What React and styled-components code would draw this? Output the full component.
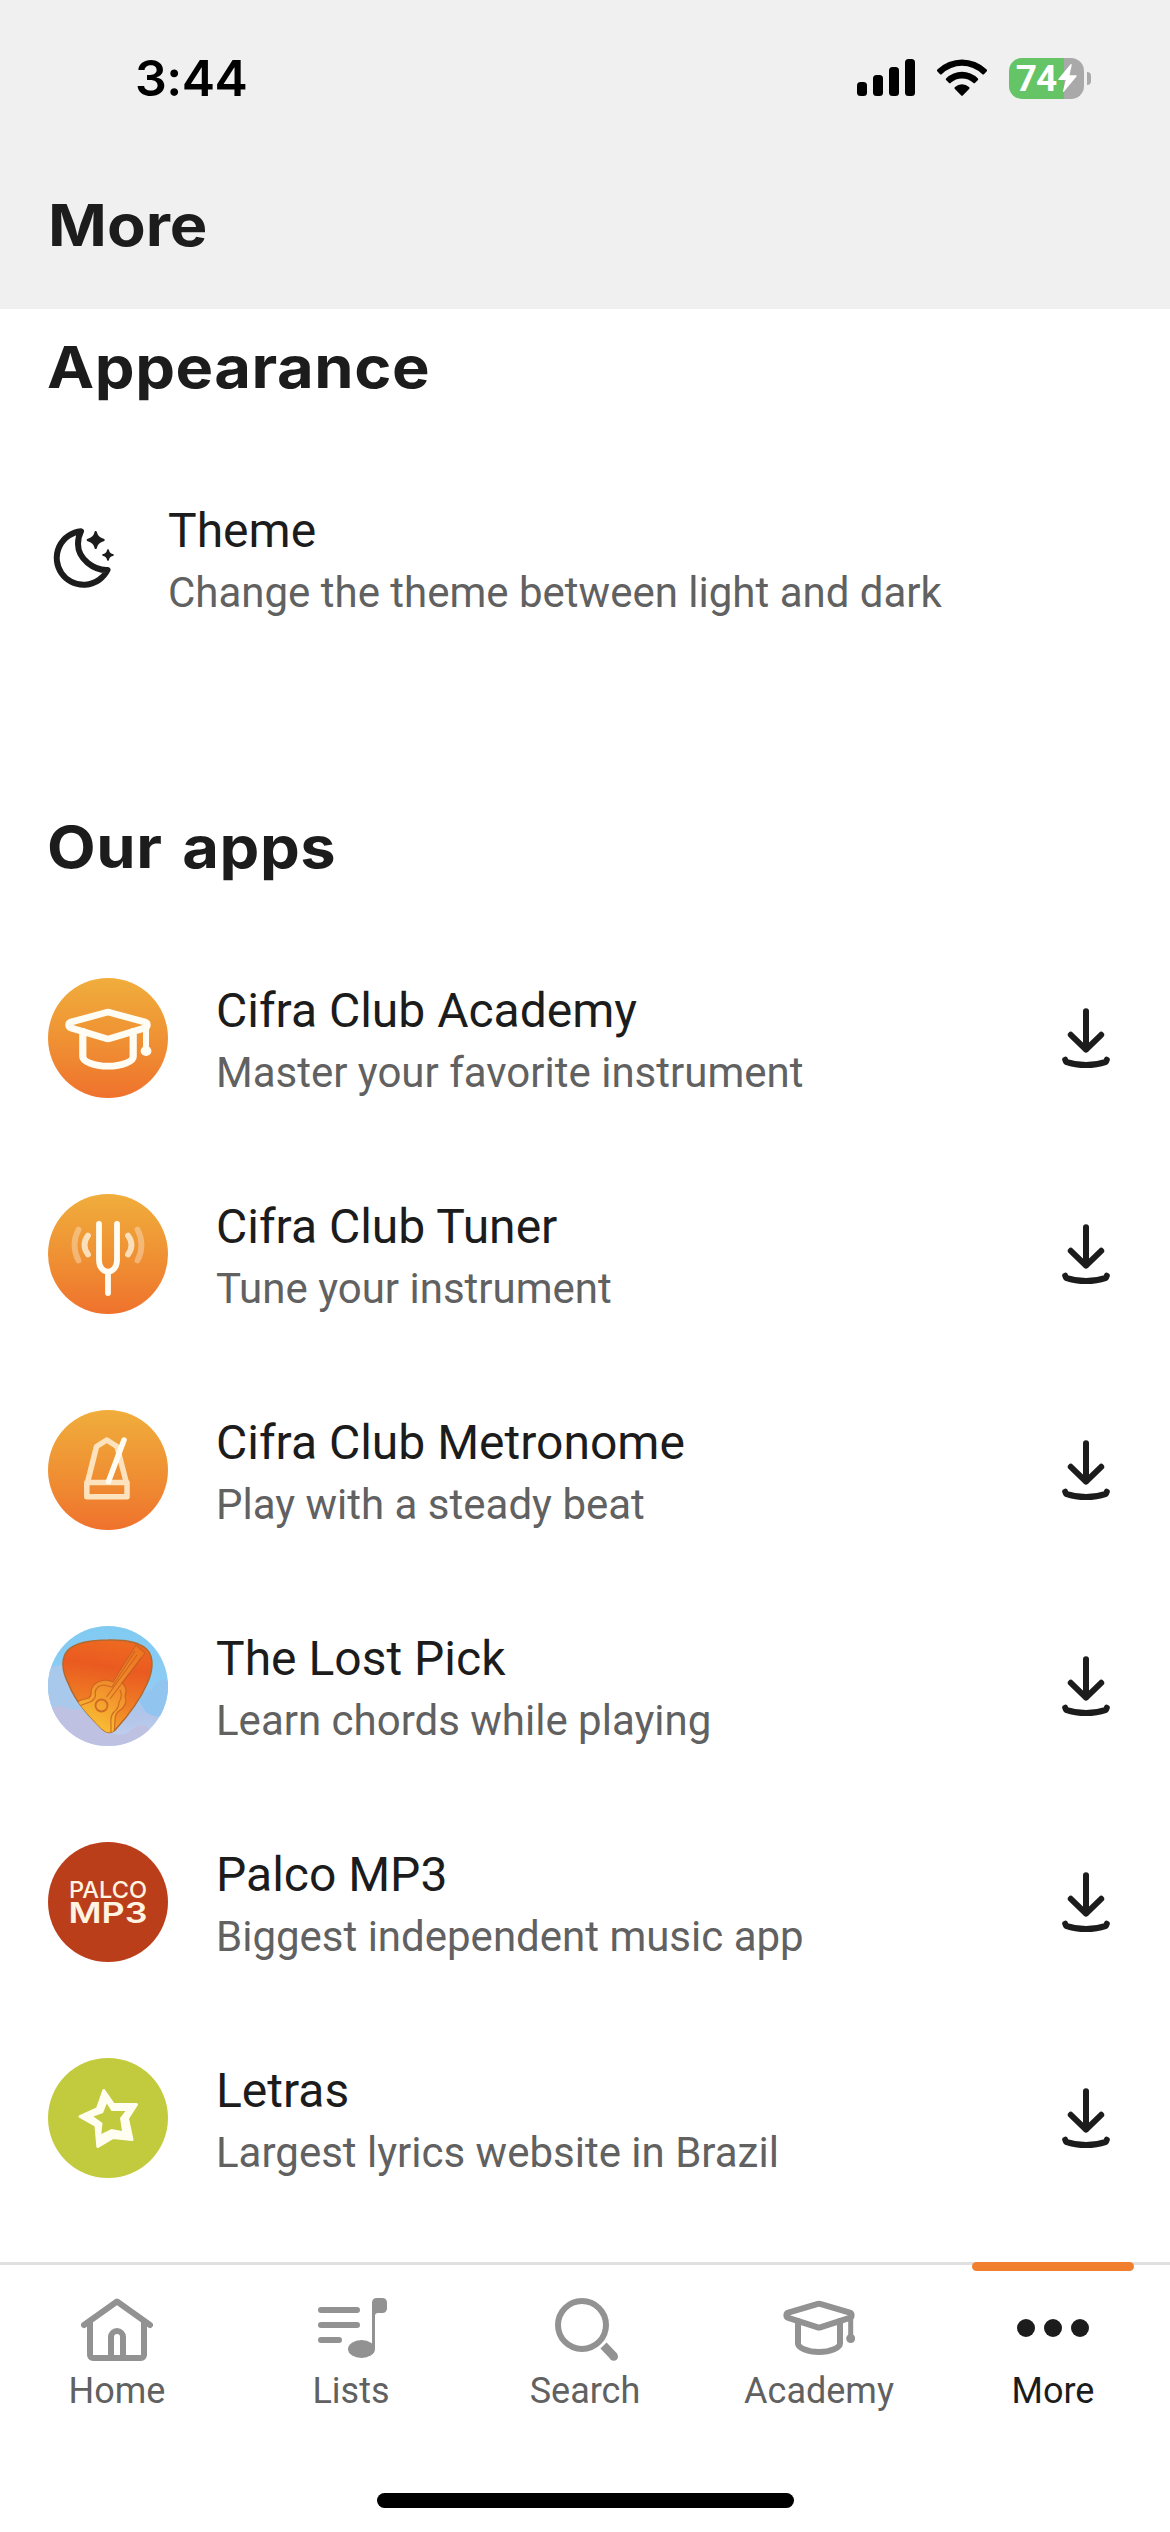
import styled, { createGlobalStyle } from "styled-components";

const apps = [
  { name: "Cifra Club Academy", text: "Master your favorite instrument", logo: "academy" },
  { name: "Cifra Club Tuner", text: "Tune your instrument", logo: "tuner" },
  { name: "Cifra Club Metronome", text: "Play with a steady beat", logo: "metronome" },
  { name: "The Lost Pick", text: "Learn chords while playing", logo: "pick" },
  { name: "Palco MP3", text: "Biggest independent music app", logo: "palco" },
  { name: "Letras", text: "Largest lyrics website in Brazil", logo: "letras" },
];

const App = () => {
  return (
    <Screen>
      <GlobalStyle />
      <Header>
        <StatusBar>
          <Time>3:44</Time>
          <StatusIcons>
            <Signal />
            <Wifi />
            <Battery />
          </StatusIcons>
        </StatusBar>
        <PageTitle>
          <span>More</span>
        </PageTitle>
      </Header>
      <Content>
        <section>
          <SectionTitle>
            <span>Appearance</span>
          </SectionTitle>
          <Row>
            <Moon />
            <RowText>
              <h3>Theme</h3>
              <p>Change the theme between light and dark</p>
            </RowText>
          </Row>
        </section>
        <section>
          <SectionTitle>
            <span>Our apps</span>
          </SectionTitle>
          {apps.map((app) => (
            <Row key={app.name}>
              <Logo $kind={app.logo}>{logos[app.logo]}</Logo>
              <RowText>
                <h3>{app.name}</h3>
                <p>{app.text}</p>
              </RowText>
              <Download />
            </Row>
          ))}
        </section>
      </Content>
      <TabBar>
        <Tabs>
          <Tab>
            <HomeIcon />
            <span>Home</span>
          </Tab>
          <Tab>
            <ListsIcon />
            <span>Lists</span>
          </Tab>
          <Tab>
            <SearchIcon />
            <span>Search</span>
          </Tab>
          <Tab>
            <TabIcon viewBox="0 0 72 72">
              <Cap />
            </TabIcon>
            <span>Academy</span>
          </Tab>
          <Tab $active>
            <MoreIcon />
            <span>More</span>
          </Tab>
        </Tabs>
        <HomeIndicator />
      </TabBar>
    </Screen>
  );
};

const Signal = () => (
  <svg width="58" height="38" viewBox="0 0 58 38">
    <rect x="0" y="23" width="10" height="14" rx="3.5" />
    <rect x="16" y="16" width="10" height="21" rx="3.5" />
    <rect x="32" y="8" width="10" height="29" rx="3.5" />
    <rect x="48" y="0" width="10" height="37" rx="3.5" />
  </svg>
);

const Wifi = () => (
  <svg width="50" height="38" viewBox="0 0 50 38">
    <path d="M.6 10.3a35 35 0 0 1 48.8 0c.8.8.8 1.5.1 2.2l-2.3 2.4c-.7.7-1.4.7-2.1 0a29 29 0 0 0-40.2 0c-.7.7-1.4.7-2.1 0L.5 12.5c-.7-.7-.7-1.4.1-2.2z" />
    <path d="M9.3 19.2a22.500 22.500 0 0 1 31.400 0c.7.7.7 1.400 0 2.100l-2.500 2.500c-.7.7-1.300.7-2 0a16.500 16.500 0 0 0-22.400 0c-.7.7-1.300.7-2 0l-2.500-2.500c-.7-.7-.7-1.400 0-2.100z" />
    <path d="M18 28a10.600 10.600 0 0 1 14 0c.7.7.7 1.300.1 2L26 36.200c-.7.7-1.300.7-2 0L17.900 30c-.6-.7-.6-1.300.1-2z" />
  </svg>
);

const Battery = () => (
  <BatteryBox>
    <BatteryBody>
      74
      <svg width="19" height="28" viewBox="0 0 19 28">
        <path d="M12.600.3L.5 14.700c-.5.700-.2 1.300.5 1.300h6.700L5 27c-.2.900.5 1.200 1.100.5L18.500 12.600c.5-.7.200-1.300-.5-1.300h-6.500L13.700 1c.2-.9-.5-1.300-1.100-.7z" />
      </svg>
    </BatteryBody>
    <BatteryNub />
  </BatteryBox>
);

const Moon = () => (
  <svg width="72" height="72" viewBox="0 0 72 72" fill="#1c1c1c">
    <path
      d="M33 9.300A26.800 26.800 0 1 0 59.500 48C46 48.500 30 37 30 22C30 17 31 13 33 9.300Z"
      fill="none"
      stroke="#1c1c1c"
      strokeWidth="6"
      strokeLinejoin="round"
    />
    <path d="M47.700 9c.9 0 1 .6 1.300 1.600 1 3.400 2.500 4.900 6 6 .9.300 1.700.5 1.700 1.400s-.8 1.100-1.700 1.400c-3.500 1.100-5 2.600-6 6-.3 1-.4 1.600-1.300 1.600s-1-.6-1.300-1.600c-1-3.400-2.500-4.900-6-6-.9-.3-1.700-.5-1.700-1.400s.8-1.100 1.700-1.400c3.500-1.100 5-2.600 6-6 .3-1 .4-1.600 1.300-1.600z" />
    <path d="M60 27.200c.7 0 .8.500 1 1.100.6 2.100 1.600 3.100 3.700 3.700.6.200 1.100.3 1.100 1s-.5.800-1.100 1c-2.100.6-3.100 1.600-3.700 3.700-.2.600-.3 1.100-1 1.100s-.8-.5-1-1.100c-.6-2.100-1.600-3.100-3.700-3.700-.6-.2-1.100-.3-1.100-1s.5-.8 1.100-1c2.100-.6 3.100-1.600 3.700-3.700.2-.6.300-1.100 1-1.100z" />
  </svg>
);

const Download = () => (
  <svg
    width="48"
    height="62"
    viewBox="0 0 48 62"
    fill="none"
    stroke="#1c1c1c"
    strokeWidth="6"
    strokeLinecap="round"
    strokeLinejoin="round"
  >
    <path d="M24 4.300V42.500M8.800 27.800L24 42.600L39.200 27.800" />
    <path d="M3.200 52.700L4 54.800C11 57.200 17 58 24 58S37 57.200 44 54.800L44.800 52.700" />
  </svg>
);

// graduation cap, used by the Academy tab and by the Academy logo
const Cap = () => (
  <g fill="none" stroke="currentColor" strokeWidth="6" strokeLinecap="round">
    <path d="M34 10.200a6 6 0 0 1 4 0L66.700 18.600a2.800 2.800 0 0 1 0 5.300L38 33.200a6 6 0 0 1-4 0L5.300 23.900a2.800 2.800 0 0 1 0-5.300z" />
    <path d="M15 27V49.500C15 53.500 24 58 36 58S57 53.500 57 49.500V27" />
    <path d="M67.700 22V44" strokeWidth="5" />
    <circle cx="67.700" cy="44.500" r="4.500" fill="currentColor" stroke="none" />
  </g>
);

const HomeIcon = () => (
  <TabIcon viewBox="0 0 72 72" fill="none" stroke="currentColor" strokeWidth="6">
    <path d="M3 31L36 7.500L69 31" strokeLinecap="round" strokeLinejoin="round" />
    <path d="M9 28V61a3 3 0 0 0 3 3H60a3 3 0 0 0 3-3V28" />
    <path d="M30 64V43a6 6 0 0 1 12 0V64" />
  </TabIcon>
);

const ListsIcon = () => (
  <TabIcon viewBox="0 0 72 72" fill="currentColor">
    <path
      d="M6 16H42M6 31H42M6 46H24"
      stroke="currentColor"
      strokeWidth="6"
      strokeLinecap="round"
    />
    <ellipse cx="46.500" cy="55" rx="13.500" ry="9" />
    <path d="M57 55V8.500A4.500 4.500 0 0 1 61.500 4H67.500A4.500 4.500 0 0 1 72 8.500V14.500A4.500 4.500 0 0 1 67.500 19H63A3 3 0 0 0 60 22V55Z" />
  </TabIcon>
);

const SearchIcon = () => (
  <TabIcon viewBox="0 0 72 72" fill="none" stroke="currentColor">
    <circle cx="33" cy="31" r="24" strokeWidth="6" />
    <path d="M54.500 51.500L65 62.500" strokeWidth="8.500" />
    <circle cx="64.700" cy="62.500" r="4.300" fill="currentColor" stroke="none" />
  </TabIcon>
);

const MoreIcon = () => (
  <TabIcon viewBox="0 0 72 72" fill="currentColor">
    <circle cx="9" cy="34" r="9" />
    <circle cx="36" cy="34" r="9" />
    <circle cx="63" cy="34" r="9" />
  </TabIcon>
);

const logos = {
  academy: (
    <svg viewBox="0 0 120 120" color="#fffdf3">
      <g transform="translate(16.800 23.200) scale(1.200 1.120)">
        <Cap />
      </g>
    </svg>
  ),
  tuner: (
    <svg viewBox="0 0 120 120" fill="none" stroke="#fffdf3" strokeWidth="5.800" strokeLinecap="round">
      <path d="M51 29.800V66C51 81.500 69 81.500 69 66V29.800M60 78V99" />
      <path d="M40 41.500Q33 51 40 60.500M80 41.500Q87 51 80 60.500" opacity=".7" />
      <path d="M30.500 35.500Q22.500 51 30.500 66.500M89.500 35.500Q97.500 51 89.500 66.500" opacity=".34" />
    </svg>
  ),
  metronome: (
    <svg viewBox="0 0 120 120" fill="none" stroke="#fde3bd" strokeWidth="5.500" strokeLinejoin="round">
      <path d="M38.800 72.500V86.700H79V72.500ZM39.500 72.500L48.500 36.500L58.800 30L69 36.500L78.300 72.500" />
      <path d="M60.500 71.500L76 30" stroke="#fffdf3" strokeLinecap="round" />
    </svg>
  ),
  pick: (
    <svg viewBox="0 0 120 120">
      <defs>
        <linearGradient id="pick" x1=".6" y1="0" x2=".45" y2="1">
          <stop offset="0" stopColor="#ee6a20" />
          <stop offset=".3" stopColor="#ea5a20" />
          <stop offset=".7" stopColor="#ef7f25" />
          <stop offset="1" stopColor="#f6a62c" />
        </linearGradient>
        <linearGradient id="guitar" x1=".8" y1="0" x2=".4" y2="1">
          <stop offset="0" stopColor="#ee7422" />
          <stop offset=".55" stopColor="#f1932c" />
          <stop offset="1" stopColor="#fac334" />
        </linearGradient>
        <clipPath id="pickShape">
          <path d="M60 14C80 13.500 92 17 98.500 23C106.500 31 105 45 99 58C91 76 78 92 68 103Q61.500 110 54 103C42 91 28 77 20.500 58C13.500 44 13 32 20 24C28 16.500 42 14 60 14Z" />
        </clipPath>
      </defs>
      <g fill="#9ccbf0">
        <path d="M0 45Q10 34 20 44Q32 54 24 66L50 94L0 100Z" fill="#a8c9ec" />
        <path d="M0 84Q12 76 23 84Q34 81 40 92Q55 94 60 106Q75 112 83 104Q96 94 102 104L90 120H0Z" fill="#bfc1e3" />
        <path d="M91 75Q94 63 104 64Q110 50 120 55V88Q108 94 98 86Z" fill="#91c4ef" />
      </g>
      <path
        d="M60 14C80 13.500 92 17 98.500 23C106.500 31 105 45 99 58C91 76 78 92 68 103Q61.500 110 54 103C42 91 28 77 20.500 58C13.500 44 13 32 20 24C28 16.500 42 14 60 14Z"
        fill="url(#pick)"
        stroke="#b2692f"
        strokeWidth="1.500"
      />
      <g clipPath="url(#pickShape)" stroke="#c85e20" strokeOpacity=".8" strokeWidth="1.200">
        <path
          d="M24 79L33 74L41 72Q44 69 43 65Q45 57 53 55Q59 53 65 56L88 19L97 27L74 57Q80 62 77 70Q80 79 72 84Q67 87 67 94L66 110H50Z"
          fill="url(#guitar)"
        />
        <path
          d="M31 80L42 76Q49 73 47 66Q49 59 56 59L64 61L87 25M72 64Q75 70 71 76Q71 82 66 86Q62 90 63 98V110M58.500 71L89 29M62 73L93 32"
          fill="none"
        />
        <circle cx="53.500" cy="79.500" r="6" fill="none" strokeWidth="1.800" />
      </g>
    </svg>
  ),
  palco: (
    <svg viewBox="0 0 120 120">
      <text fill="#fff4e2" fontFamily="Inter, sans-serif">
        <tspan x="21" y="55.700" fontSize="22.500" fontWeight="500" textLength="78" lengthAdjust="spacingAndGlyphs">
          PALCO
        </tspan>
        <tspan x="20.500" y="81.300" fontSize="29" fontWeight="600" textLength="79" lengthAdjust="spacingAndGlyphs">
          MP3
        </tspan>
      </text>
    </svg>
  ),
  letras: (
    <svg viewBox="0 0 120 120" strokeLinejoin="round">
      <path
        d="M55.800 32.500L65.500 46.500L88.500 46.500L79.500 60.500L84 81.500L65 79.500L49.800 88.500L48 67.500L32 58.500L49.500 50.500Z"
        fill="#fffef0"
        stroke="#fffef0"
        strokeWidth="3"
      />
      <path d="M58.800 45.500L63.500 53L77.500 53L72 60L74 73L63.500 71L53.300 76L54.500 65L45.500 58.500L55 55Z" fill="#c2cb3e" />
    </svg>
  ),
};

const orange = "linear-gradient(#f0ad3c, #ef9133 52%, #ef722d)";

const backgrounds = {
  academy: orange,
  tuner: orange,
  metronome: orange,
  pick: "linear-gradient(#80caf2, #8cccf4 45%, #b2c5e9 75%, #c3d3f0)",
  palco: "#bb3e1a",
  letras: "#c2cb3e",
};

const GlobalStyle = createGlobalStyle`
  * {
    box-sizing: border-box;
  }
  body,
  h1,
  h2,
  h3,
  p {
    margin: 0;
  }
  svg {
    display: block;
    flex-shrink: 0;
  }
`;

const Screen = styled.div`
  display: flex;
  flex-direction: column;
  width: 1170px;
  height: 2532px;
  overflow: hidden;
  background-color: #ffffff;
  color: #1c1c1c;
  font-family: Roboto, sans-serif;
`;

const Header = styled.header`
  height: 309px;
  background-color: #f0f0f0;
`;

const StatusBar = styled.div`
  display: flex;
  justify-content: space-between;
  align-items: center;
  height: 156px;
  padding: 0 79px 0 135px;
  color: #000000;
`;

const Time = styled.div`
  font-family: Inter, sans-serif;
  font-size: 50px;
  font-weight: 600;
  line-height: 60px;
  letter-spacing: -0.5px;
`;

const StatusIcons = styled.div`
  display: flex;
  align-items: center;
  gap: 22px;
`;

const BatteryBox = styled.div`
  display: flex;
  align-items: center;
  gap: 3px;
`;

const BatteryBody = styled.div`
  display: flex;
  align-items: center;
  justify-content: center;
  gap: 2px;
  width: 75px;
  height: 41px;
  border-radius: 13px;
  background: linear-gradient(90deg, #65c466 74%, #a9a9a9 74%);
  color: #ffffff;
  font-size: 37px;
  font-weight: 700;
  line-height: 41px;
  letter-spacing: -1px;

  svg {
    fill: #ffffff;
  }
`;

const BatteryNub = styled.div`
  width: 4px;
  height: 13px;
  border-radius: 0 4px 4px 0;
  background-color: #a9a9a9;
`;

const PageTitle = styled.h1`
  padding-left: 48px;
  font-family: Inter, sans-serif;
  font-size: 58px;
  font-weight: 700;
  line-height: 138px;

  span {
    display: inline-block;
    transform: scaleX(1.09);
    transform-origin: left;
  }
`;

const Content = styled.main`
  display: flex;
  flex-direction: column;
  gap: 123px;
  flex: 1;
`;

const SectionTitle = styled.h2`
  height: 141px;
  padding-left: 47px;
  font-family: Inter, sans-serif;
  font-size: 58px;
  font-weight: 700;
  line-height: 116px;
  letter-spacing: 0.5px;
  word-spacing: 4px;

  span {
    display: inline-block;
    transform: scaleX(1.09);
    transform-origin: left;
  }
`;

const Row = styled.div`
  display: flex;
  align-items: center;
  gap: 48px;
  height: 216px;
  padding: 0 60px 0 48px;
`;

const RowText = styled.div`
  flex: 1;
  padding-top: 9px;

  h3 {
    font-size: 48px;
    font-weight: 400;
    line-height: 60px;
  }
  p {
    color: #616161;
    font-size: 42px;
    line-height: 64px;
  }
`;

const Logo = styled.div`
  width: 120px;
  height: 120px;
  border-radius: 50%;
  overflow: hidden;
  background: ${(props) => backgrounds[props.$kind]};
`;

const TabBar = styled.footer`
  display: flex;
  flex-direction: column;
  justify-content: space-between;
  align-items: center;
  height: 270px;
  padding-bottom: 24px;
  border-top: 3px solid #e0e0e0;
`;

const Tabs = styled.nav`
  display: grid;
  grid-template-columns: repeat(5, 1fr);
  width: 100%;
`;

const Tab = styled.div`
  position: relative;
  display: flex;
  flex-direction: column;
  align-items: center;
  padding-top: 29px;
  color: ${(props) => (props.$active ? "#1c1c1c" : "#929292")};

  span {
    color: ${(props) => (props.$active ? "#1c1c1c" : "#616161")};
    font-size: 36px;
    line-height: 50px;
  }

  &::before {
    content: "";
    display: ${(props) => (props.$active ? "block" : "none")};
    position: absolute;
    top: -3px;
    width: 162px;
    height: 9px;
    border-radius: 5px;
    background-color: #f08030;
  }
`;

const TabIcon = styled.svg`
  width: 72px;
  height: 72px;
`;

const HomeIndicator = styled.div`
  width: 417px;
  height: 15px;
  border-radius: 8px;
  background-color: #000000;
`;

export default App;
